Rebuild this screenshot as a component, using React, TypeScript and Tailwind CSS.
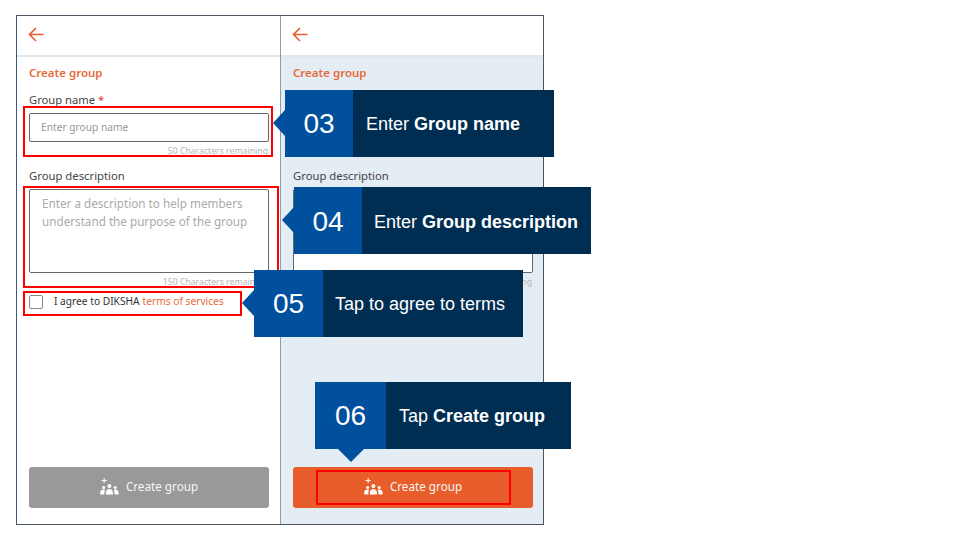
function BackArrow() {
  return (
    <svg width="16" height="15" viewBox="0 0 16 15" fill="none" stroke="#e85d2a" strokeWidth="1.6">
      <path d="M15.5 7.5H1.5M8 1 1.5 7.5 8 14" />
    </svg>
  );
}

function GroupIcon() {
  return (
    <svg width="19" height="18" viewBox="0 0 19 18" fill="#fff">
      <path d="M3.6 0h1.1v2h2v1.1h-2v2H3.6v-2h-2V2h2z" />
      <circle cx="9.4" cy="8" r="2" />
      <circle cx="3.6" cy="9.6" r="1.5" />
      <circle cx="15.2" cy="9.6" r="1.5" />
      <path d="M5.8 15.2c0-2.4 1.4-4.2 3.6-4.2s3.6 1.8 3.6 4.2v1.2H5.8z" />
      <path d="M0.2 16.4v-1.8c0-1.7 1.3-3 3.4-3 .6 0 1.1.1 1.5.3-.5.9-.8 2-.8 3.4v1.1zM18.6 16.4v-1.8c0-1.7-1.3-3-3.4-3-.6 0-1.1.1-1.5.3.5.9.8 2 .8 3.4v1.1z" />
    </svg>
  );
}

function Phone({ tinted, active }: { tinted?: boolean; active?: boolean }) {
  return (
    <div className={`flex flex-col h-full ${tinted ? "w-[262px]" : "w-[263px]"}`}>
      <div className="h-[41px] shrink-0 bg-white border-b-2 border-[#e3e5e8] pl-[11px] pt-[11px]">
        <BackArrow />
      </div>
      <div className={`flex-1 flex flex-col pl-[12px] pt-[7px] pb-[16px] ${tinted ? "bg-[#e4ecf4] pr-[10px]" : "bg-white pr-[11px]"}`}>
        <div className="h-[17px] text-[11.5px] leading-[17px] font-semibold text-[#e8693a]">Create group</div>
        <div className="mt-[11px] h-[16px] text-[11.2px] leading-[16px] text-[#444]">
          Group name<span className="ml-[3px] text-[#e0362c]">*</span>
        </div>
        <div className="mt-[5px] h-[29px] bg-white border border-[#666] rounded-[2px] pl-[11px] text-[10.2px] leading-[27px] text-[#999]">
          Enter group name
        </div>
        <div className="mt-[2px] h-[14px] pr-[1px] text-right text-[8.7px] leading-[14px] text-[#b5b5b5]">50 Characters remaining</div>
        <div className="mt-[10px] h-[16px] text-[11.3px] leading-[16px] text-[#444]">Group description</div>
        <div className="mt-[5px] h-[84px] bg-white border border-[#666] rounded-[2px] pl-[12px] pr-[8px] pt-[4px] text-[11.7px] leading-[18px] text-[#aaa]">
          Enter a description to help members understand the purpose of the group
        </div>
        <div className="mt-[2px] h-[14px] pr-[1px] text-right text-[8.7px] leading-[14px] text-[#b5b5b5]">150 Characters remaining</div>
        <div className="mt-[1px] flex items-center h-[24px]">
          <div className="w-[14px] h-[14px] bg-white border border-[#888] rounded-[2px]" />
          <span className="ml-[11px] text-[10.2px] text-[#333]">I agree to DIKSHA</span>
          <span className="ml-[3px] text-[10.2px] text-[#e8693a]">terms of services</span>
        </div>
        <div className="flex-1" />
        <div className={`h-[41px] pb-[2px] rounded-[3px] flex items-center justify-center gap-[7px] text-[11.7px] text-[#f5f5f5] ${active ? "bg-[#e85d2a]" : "bg-[#999999]"}`}>
          <GroupIcon />
          Create group
        </div>
      </div>
    </div>
  );
}

function Callout({ num, className, numClass, children, arrow }: { num: string; className: string; numClass: string; children: React.ReactNode; arrow: React.ReactNode }) {
  return (
    <div className={`absolute flex h-[67px] ${className}`}>
      {arrow}
      <div className={`bg-[#00509d] text-white flex items-center justify-center text-[28px] font-['Liberation_Sans',sans-serif] ${numClass}`}>{num}</div>
      <div className="flex-1 bg-[#002d52] text-white flex items-center pt-[2px] text-[18px] font-['Liberation_Sans',sans-serif]">{children}</div>
    </div>
  );
}

const leftArrow = (
  <div className="absolute left-[-12px] top-[20px] w-0 h-0 border-y-[13px] border-y-transparent border-r-[12px] border-r-[#00509d]" />
);

export default function App() {
  return (
    <div className="relative w-[960px] h-[540px] bg-white overflow-hidden font-['Noto_Sans',sans-serif]">
      <div className="pl-[16px] pt-[15px]">
        <div className="flex w-[528px] h-[510px] border border-[#4a5560] border-l-[#3f5a78]">
          <div className="border-r border-[#8a9db3] flex">
            <Phone />
          </div>
          <Phone tinted active />
        </div>
      </div>

      {/* red highlights */}
      <div className="absolute left-[23px] top-[106px] w-[250px] h-[51px] border-2 border-[#ff0000]" />
      <div className="absolute left-[23px] top-[186px] w-[256px] h-[102px] border-2 border-[#ff0000]" />
      <div className="absolute left-[23px] top-[291px] w-[219px] h-[25px] border-2 border-[#ff0000]" />
      <div className="absolute left-[316px] top-[470px] w-[195px] h-[35px] border-2 border-[#ff0000]" />

      <Callout num="03" className="left-[285px] top-[90px] w-[269px]" numClass="w-[68px]" arrow={leftArrow}>
        <span className="pl-[13px]">Enter <b>Group name</b></span>
      </Callout>
      <Callout num="04" className="left-[294px] top-[187px] w-[297px]" numClass="w-[68px] pt-[2px]" arrow={leftArrow}>
        <span className="pl-[12px] pt-[2px]">Enter <b>Group description</b></span>
      </Callout>
      <Callout num="05" className="left-[254px] top-[270px] w-[269px]" numClass="w-[69px]" arrow={leftArrow}>
        <span className="pl-[12px]">Tap to agree to terms</span>
      </Callout>
      <Callout
        num="06"
        className="left-[315px] top-[382px] w-[256px]"
        numClass="w-[71px]"
        arrow={<div className="absolute left-[23px] top-[67px] w-0 h-0 border-x-[13px] border-x-transparent border-t-[13px] border-t-[#00509d]" />}
      >
        <span className="pl-[13px]">Tap <b>Create group</b></span>
      </Callout>
    </div>
  );
}
